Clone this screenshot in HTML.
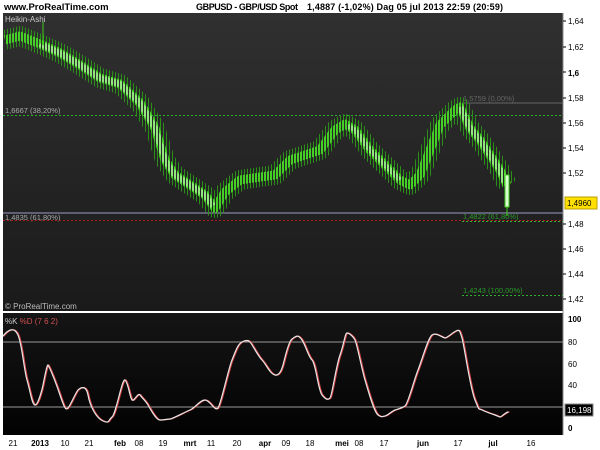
<!DOCTYPE html>
<html><head><meta charset="utf-8"><style>
html,body{margin:0;padding:0;background:#fff;width:600px;height:450px;overflow:hidden;font-family:"Liberation Sans",sans-serif}
</style></head><body>
<svg width="600" height="450" xmlns="http://www.w3.org/2000/svg" font-family="Liberation Sans, sans-serif">
<defs>
<linearGradient id="g1" x1="0" y1="0" x2="0" y2="1"><stop offset="0" stop-color="#303030"/><stop offset="1" stop-color="#1a1a1a"/></linearGradient>
<linearGradient id="g2" x1="0" y1="0" x2="0" y2="1"><stop offset="0" stop-color="#151515"/><stop offset="1" stop-color="#020202"/></linearGradient>
<pattern id="wk" patternUnits="userSpaceOnUse" width="3" height="10"><rect x="1" y="0" width="1" height="10" fill="#2a9018"/></pattern>
<pattern id="bd" patternUnits="userSpaceOnUse" width="3" height="10"><rect x="0" y="0" width="2" height="10" fill="#45d025"/></pattern>
<pattern id="lt" patternUnits="userSpaceOnUse" width="3" height="10"><rect x="0.5" y="0" width="1" height="10" fill="#e0ffd8"/></pattern>
</defs>
<rect width="600" height="450" fill="#fff"/>
<text x="4" y="10" font-size="9.5" font-weight="bold" fill="#000">www.ProRealTime.com</text>
<text x="196" y="10" font-size="9" font-weight="bold" fill="#000" textLength="102">GBPUSD - GBP/USD Spot</text>
<text x="307" y="10" font-size="9" font-weight="bold" fill="#000" textLength="196">1,4887 (-1,02%)    Dag  05 jul 2013 22:59 (20:59)</text>
<rect x="3" y="13" width="560" height="298" fill="url(#g1)"/>
<rect x="3" y="311" width="560" height="2" fill="#fff"/>
<rect x="3" y="313" width="560" height="122" fill="url(#g2)"/>
<line x1="563" y1="13" x2="563" y2="435" stroke="#888"/>
<text x="5" y="22" font-size="8" fill="#ccc">Heikin-Ashi</text>
<text x="5" y="309" font-size="8" fill="#bbb">© ProRealTime.com</text>
<line x1="3" y1="115.5" x2="563" y2="115.5" stroke="#2fb02f" stroke-dasharray="2 2"/>
<text x="5" y="113" font-size="7.5" fill="#aaa">1,6667 (38,20%)</text>
<line x1="462" y1="103" x2="563" y2="103" stroke="#666"/>
<text x="463" y="101" font-size="7.5" fill="#666">1,5759 (0,00%)</text>
<line x1="3" y1="213" x2="563" y2="213" stroke="#9a9ac8"/>
<text x="5" y="220" font-size="7.5" fill="#aaa">1,4835 (61,80%)</text>
<line x1="3" y1="220.5" x2="563" y2="220.5" stroke="#b01818" stroke-dasharray="2 2"/>
<line x1="462" y1="221.5" x2="563" y2="221.5" stroke="#2fb02f" stroke-dasharray="2 2"/>
<text x="463" y="219" font-size="7.5" fill="#2a9a2a">1,4822 (61,80%)</text>
<line x1="462" y1="295.5" x2="563" y2="295.5" stroke="#2fb02f" stroke-dasharray="2 2"/>
<text x="463" y="293" font-size="7.5" fill="#2a9a2a">1,4243 (100,00%)</text>
<g fill="none" stroke-linejoin="round">
<polyline stroke="url(#wk)" stroke-width="20" points="5,40 20,36 40,44 60,53 80,65 100,78 120,84 140,103 155,128 165,160 175,175 190,185 205,195 215,208 225,192 240,180 260,177 275,175 290,160 305,155 320,150 335,130 345,124 355,130 370,150 385,165 400,180 410,185 420,175 430,150 440,125 455,110 460,107 470,128 480,140 490,155 500,170 507,185"/>
<polyline stroke="url(#bd)" stroke-width="9" points="5,40 20,36 40,44 60,53 80,65 100,78 120,84 140,103 155,128 165,160 175,175 190,185 205,195 215,208 225,192 240,180 260,177 275,175 290,160 305,155 320,150 335,130 345,124 355,130 370,150 385,165 400,180 410,185 420,175 430,150 440,125 455,110 460,107 470,128 480,140 490,155 500,170 507,185"/>
<polyline stroke="url(#lt)" stroke-width="6" points="40,44 60,53 80,65 100,78 120,84 140,103 155,128 165,160 175,175 190,185 205,195 213,206"/>
<polyline stroke="url(#lt)" stroke-width="6" points="460,107 470,128 480,140 490,155 500,170 505,182"/>
<polyline stroke="url(#lt)" stroke-width="5" points="348,126 355,130 370,150 385,165 400,180"/>
<line x1="43" y1="22" x2="43" y2="45" stroke="#3fcf1f"/>
<rect x="505" y="175" width="4" height="32" fill="#d8ffd0" stroke="#3fcf1f"/>
<line x1="507" y1="207" x2="507" y2="216" stroke="#3fcf1f"/>
</g>
<line x1="3" y1="342" x2="563" y2="342" stroke="#999"/>
<line x1="3" y1="407" x2="563" y2="407" stroke="#999"/>
<text x="5" y="324" font-size="8" fill="#ccc">%K <tspan fill="#d05050">%D (7 6 2)</tspan></text>
<g fill="none" stroke-width="1.2" stroke-linejoin="round" stroke-linecap="round">
<path stroke="#d04040" transform="translate(1,0)" d="M3,336 C8,330 14,326 18,335 S24,370 27,380 S32,405 35,405 S42,390 43,385 S47,364 48,365 S55,380 60,395 S66,410 68,408 S76,392 78,390 S86,384 88,395 S96,418 103,421 S108,420 112,417 S122,378 125,380 S130,398 132,400 S138,392 140,395 S145,400 148,405 S156,420 160,420 S168,419 170,419 S185,412 190,410 S200,400 205,400 S215,412 218,408 S228,370 232,360 S238,344 242,342 S248,340 250,342 S258,356 262,360 S270,374 275,375 S282,368 283,365 S288,342 292,339 S298,334 302,340 S308,356 312,360 S318,390 322,395 S328,400 330,398 S336,366 340,355 S345,333 347,333 S353,336 355,340 S362,370 365,380 S374,412 378,415 S383,416 385,416 S392,411 395,410 S402,408 405,406 S414,380 418,370 S428,338 432,335 S443,338 445,338 S452,333 456,331 S460,332 462,338 S470,388 475,400 S478,408 482,410 S492,414 495,415 S499,417 500,417 S505,413 508,412"/>
<path stroke="#e8e8e8" d="M3,336 C8,330 14,326 18,335 S24,370 27,380 S32,405 35,405 S42,390 43,385 S47,364 48,365 S55,380 60,395 S66,410 68,408 S76,392 78,390 S86,384 88,395 S96,418 103,421 S108,420 112,417 S122,378 125,380 S130,398 132,400 S138,392 140,395 S145,400 148,405 S156,420 160,420 S168,419 170,419 S185,412 190,410 S200,400 205,400 S215,412 218,408 S228,370 232,360 S238,344 242,342 S248,340 250,342 S258,356 262,360 S270,374 275,375 S282,368 283,365 S288,342 292,339 S298,334 302,340 S308,356 312,360 S318,390 322,395 S328,400 330,398 S336,366 340,355 S345,333 347,333 S353,336 355,340 S362,370 365,380 S374,412 378,415 S383,416 385,416 S392,411 395,410 S402,408 405,406 S414,380 418,370 S428,338 432,335 S443,338 445,338 S452,333 456,331 S460,332 462,338 S470,388 475,400 S478,408 482,410 S492,414 495,415 S499,417 500,417 S505,413 508,412"/>
</g>
<g font-size="8" fill="#000">
<g stroke="#000"><line x1="563" y1="21" x2="566" y2="21"/><line x1="563" y1="47" x2="566" y2="47"/><line x1="563" y1="72" x2="566" y2="72"/><line x1="563" y1="98" x2="566" y2="98"/><line x1="563" y1="123" x2="566" y2="123"/><line x1="563" y1="148" x2="566" y2="148"/><line x1="563" y1="173" x2="566" y2="173"/><line x1="563" y1="224" x2="566" y2="224"/><line x1="563" y1="249" x2="566" y2="249"/><line x1="563" y1="274" x2="566" y2="274"/><line x1="563" y1="299" x2="566" y2="299"/></g>
<text x="568" y="24">1,64</text><text x="568" y="50">1,62</text><text x="568" y="76" font-weight="bold">1,6</text><text x="568" y="101">1,58</text><text x="568" y="126">1,56</text><text x="568" y="151">1,54</text><text x="568" y="176">1,52</text><text x="568" y="227">1,48</text><text x="568" y="252">1,46</text><text x="568" y="277">1,44</text><text x="568" y="302">1,42</text>
<text x="568" y="322" font-weight="bold">100</text><text x="568" y="345">80</text><text x="568" y="367">60</text><text x="568" y="388">40</text><text x="568" y="431" font-weight="bold">0</text>
</g>
<rect x="565" y="197" width="32" height="12" fill="#ffe000" stroke="#b8a000"/>
<text x="567" y="206" font-size="8" fill="#000">1,4960</text>
<rect x="565" y="404" width="28" height="12" fill="#000" stroke="#888"/>
<text x="567" y="413" font-size="8" fill="#fff">16,198</text>
<g font-size="8" fill="#000" text-anchor="middle">
<text x="13" y="446">21</text><text x="40" y="446" font-weight="bold">2013</text><text x="65" y="446">10</text><text x="89" y="446">21</text><text x="120" y="446" font-weight="bold">feb</text><text x="139" y="446">08</text><text x="163" y="446">19</text><text x="190" y="446" font-weight="bold">mrt</text><text x="211" y="446">11</text><text x="237" y="446">20</text><text x="265" y="446" font-weight="bold">apr</text><text x="286" y="446">09</text><text x="310" y="446">18</text><text x="342" y="446" font-weight="bold">mei</text><text x="359" y="446">08</text><text x="384" y="446">17</text><text x="423" y="446" font-weight="bold">jun</text><text x="458" y="446">17</text><text x="493" y="446" font-weight="bold">jul</text><text x="531" y="446">16</text>
</g>
</svg>
</body></html>
